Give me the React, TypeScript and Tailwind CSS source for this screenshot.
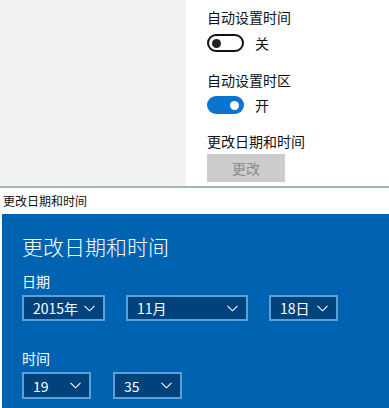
import React from "react";

const font = { fontFamily: '"Noto Sans CJK SC", "Noto Sans", sans-serif' };

function Chevron() {
  return (
    <svg width="11" height="7" viewBox="0 0 11 7" fill="none">
      <path d="M0.5 0.8 L5.5 5.8 L10.5 0.8" stroke="#ffffff" strokeWidth="1.1" />
    </svg>
  );
}

function Drop({ label, w, h = 26 }: { label: string; w: number; h?: number }) {
  return (
    <div
      className="flex items-center justify-between border-2 border-[#5f9fd8] bg-[#00437c] pl-[9px] pr-[8px] text-[14px] text-white"
      style={{ width: w, height: h }}
    >
      <span className="leading-none">{label}</span>
      <Chevron />
    </div>
  );
}

export default function App() {
  return (
    <div className="w-[389px] h-[408px] overflow-hidden bg-white" style={font}>
      <div className="flex h-[186px]">
        <div className="w-[186px] bg-[#f2f2f2]" />
        <div className="flex flex-1 flex-col pl-[21px] text-[14px] text-[#111]">
          <div className="mt-[7px] h-[20px] leading-[20px]">自动设置时间</div>
          <div className="mt-[7px] flex h-[18px] items-center">
            <div className="flex h-[18px] w-[37px] items-center rounded-full border-2 border-[#111] pl-[3px]">
              <div className="h-[9px] w-[9px] rounded-full bg-[#222]" />
            </div>
            <span className="ml-[11px] text-[14px]">关</span>
          </div>
          <div className="mt-[18px] h-[20px] leading-[20px]">自动设置时区</div>
          <div className="mt-[6px] flex h-[18px] items-center">
            <div className="flex h-[18px] w-[37px] items-center justify-end rounded-full bg-[#0a74d1] pr-[5px]">
              <div className="h-[9px] w-[9px] rounded-full bg-white" />
            </div>
            <span className="ml-[11px] text-[14px]">开</span>
          </div>
          <div className="mt-[17px] h-[20px] leading-[20px]">更改日期和时间</div>
          <div className="mt-[3px] flex h-[28px] w-[78px] items-center justify-center bg-[#cccccc] text-[14px] text-[#8a8a8a]">
            更改
          </div>
        </div>
      </div>
      <div className="h-[2px] bg-[#9fb5c6]" />
      <div className="flex h-[26px] items-center pl-[3px] text-[12px] text-[#111]">更改日期和时间</div>
      <div className="ml-[2px] h-[194px] bg-[#0063b1] pl-[20px] pt-[18px] text-white">
        <div className="h-[28px] text-[21px] font-light leading-[28px]">更改日期和时间</div>
        <div className="mt-[11px] h-[20px] text-[14px] leading-[20px]">日期</div>
        <div className="mt-[4px] flex">
          <Drop label="2015年" w={83} />
          <div className="ml-[21px]">
            <Drop label="11月" w={122} />
          </div>
          <div className="ml-[21px]">
            <Drop label="18日" w={69} />
          </div>
        </div>
        <div className="mt-[27px] h-[20px] text-[14px] leading-[20px]">时间</div>
        <div className="mt-[4px] flex">
          <Drop label="19" w={69} h={27} />
          <div className="ml-[22px]">
            <Drop label="35" w={69} h={27} />
          </div>
        </div>
      </div>
    </div>
  );
}
